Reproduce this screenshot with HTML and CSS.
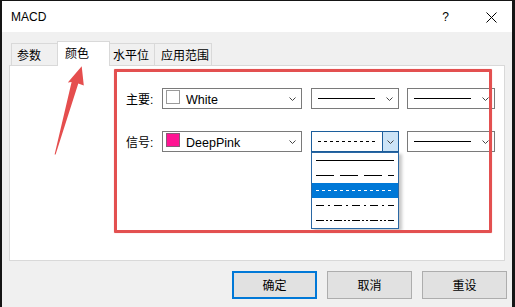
FILE: index.html
```html
<!DOCTYPE html>
<html lang="zh-CN">
<head>
<meta charset="utf-8">
<title>MACD</title>
<link rel="stylesheet" href="styles.css">
</head>
<body>
<div class="window">
  <div class="titlebar">
    <span class="title">MACD</span>
    <span class="help">?</span>
    <svg class="close" width="11" height="11" viewBox="0 0 11 11"><path d="M0.5 0.5L10.5 10.5M10.5 0.5L0.5 10.5" stroke="#000" stroke-width="1" fill="none"/></svg>
  </div>

  <div class="tabs">
    <div class="tab tab-1">参数</div>
    <div class="tab tab-active tab-2">颜色</div>
    <div class="tab tab-3">水平位</div>
    <div class="tab tab-4">应用范围</div>
  </div>

  <div class="panel">
    <div class="form">
      <div class="row">
        <span class="label">主要:</span>
        <div class="combo combo-color">
          <span class="swatch swatch-white"></span>
          <span class="ctext">White</span>
          <svg class="chev" width="7" height="4" viewBox="0 0 7 4"><polyline points="0.5,0.5 3.5,3.5 6.5,0.5" fill="none" stroke="#444" stroke-width="1"/></svg>
        </div>
        <div class="combo combo-line combo-mid">
          <svg class="ln" width="57" height="1"><line x1="0" y1="0.5" x2="57" y2="0.5" stroke="#000" stroke-width="1"/></svg>
          <svg class="chev" width="7" height="4" viewBox="0 0 7 4"><polyline points="0.5,0.5 3.5,3.5 6.5,0.5" fill="none" stroke="#444" stroke-width="1"/></svg>
        </div>
        <div class="combo combo-line">
          <svg class="ln" width="57" height="1"><line x1="0" y1="0.5" x2="57" y2="0.5" stroke="#000" stroke-width="1"/></svg>
          <svg class="chev" width="7" height="4" viewBox="0 0 7 4"><polyline points="0.5,0.5 3.5,3.5 6.5,0.5" fill="none" stroke="#444" stroke-width="1"/></svg>
        </div>
      </div>

      <div class="row">
        <span class="label">信号:</span>
        <div class="combo combo-color">
          <span class="swatch swatch-pink"></span>
          <span class="ctext">DeepPink</span>
          <svg class="chev" width="7" height="4" viewBox="0 0 7 4"><polyline points="0.5,0.5 3.5,3.5 6.5,0.5" fill="none" stroke="#444" stroke-width="1"/></svg>
        </div>
        <div class="combo combo-line combo-mid combo-open">
          <svg class="ln" width="57" height="1"><line x1="0" y1="0.5" x2="57" y2="0.5" stroke="#000" stroke-width="1" stroke-dasharray="3 3"/></svg>
          <span class="dd-btn">
            <svg class="chev-in" width="7" height="4" viewBox="0 0 7 4"><polyline points="0.5,0.5 3.5,3.5 6.5,0.5" fill="none" stroke="#444" stroke-width="1"/></svg>
          </span>
          <div class="dropdown">
            <div class="item"><svg width="78" height="1"><line x1="0" y1="0.5" x2="78" y2="0.5" stroke="#000" stroke-width="1"/></svg></div>
            <div class="item"><svg width="78" height="1"><line x1="0" y1="0.5" x2="78" y2="0.5" stroke="#000" stroke-width="1" stroke-dasharray="18 6"/></svg></div>
            <div class="item item-selected"><svg width="78" height="1"><line x1="0" y1="0.5" x2="78" y2="0.5" stroke="#fff" stroke-width="1" stroke-dasharray="3 3"/></svg></div>
            <div class="item"><svg width="78" height="1"><line x1="0" y1="0.5" x2="78" y2="0.5" stroke="#000" stroke-width="1" stroke-dasharray="8 4 2 4"/></svg></div>
            <div class="item"><svg width="78" height="1"><line x1="0" y1="0.5" x2="78" y2="0.5" stroke="#000" stroke-width="1" stroke-dasharray="8 2 2 2 2 2"/></svg></div>
          </div>
        </div>
        <div class="combo combo-line">
          <svg class="ln" width="57" height="1"><line x1="0" y1="0.5" x2="57" y2="0.5" stroke="#000" stroke-width="1"/></svg>
          <svg class="chev" width="7" height="4" viewBox="0 0 7 4"><polyline points="0.5,0.5 3.5,3.5 6.5,0.5" fill="none" stroke="#444" stroke-width="1"/></svg>
        </div>
      </div>
    </div>
  </div>

  <div class="buttons">
    <button class="btn btn-default">确定</button>
    <button class="btn">取消</button>
    <button class="btn">重设</button>
  </div>

  <div class="annot-box"></div>
  <svg class="annot-arrow" width="100" height="160" viewBox="0 0 100 160">
    <polygon points="79.7,65.3 81.8,84.5 76.3,82.6 53.6,153.6 52.6,153.6 69.6,81 65.8,81.6" fill="#e54e4e"/>
  </svg>
</div>
</body>
</html>
```

FILE: styles.css
```css
* { box-sizing: border-box; }

html, body {
  margin: 0;
  padding: 0;
}

body {
  background: #151515;
  width: 515px;
  height: 307px;
  overflow: hidden;
  font-family: "Noto Sans CJK SC", sans-serif;
  font-size: 12px;
  color: #000;
}

.window {
  position: relative;
  margin: 1px 0 0 2px;
  width: 510px;
  height: 306px;
  background: #f0f0f0;
  display: flex;
  flex-direction: column;
}

/* title bar */
.titlebar {
  height: 31px;
  background: #fff;
  display: flex;
  align-items: center;
  padding: 0 15px 0 9px;
}

.title {
  flex: 1;
  font-family: "Liberation Sans", sans-serif;
  font-size: 12px;
  line-height: 1;
}

.help {
  font-family: "Liberation Sans", sans-serif;
  font-size: 12px;
  line-height: 1;
  margin-right: 37px;
  margin-top: 1px;
}

.close {
  display: block;
  margin-top: 1px;
}

/* tabs */
.tabs {
  display: flex;
  align-items: flex-end;
  height: 24px;
  margin: 9px 0 0 9px;
}

.tab {
  height: 22px;
  margin-right: -1px;
  margin-bottom: 0;
  border: 1px solid #d9d9d9;
  border-bottom: none;
  background: #f0f0f0;
  display: flex;
  align-items: center;
  line-height: 1;
  padding-top: 1px;
}

.tab-1 { width: 47px; padding-left: 5px; }
.tab-2 { width: 53px; padding-left: 7px; }
.tab-3 { width: 46px; padding-left: 3px; }
.tab-4 { width: 58px; padding-left: 6px; }

.tab-active {
  position: relative;
  z-index: 1;
  height: 25px;
  margin-bottom: -1px;
  background: #fff;
  padding-top: 0;
  padding-bottom: 3px;
}

/* panel */
.panel {
  margin-left: 7px;
  width: 496px;
  height: 196px;
  background: #fff;
  border: 1px solid #d9d9d9;
}

.form {
  padding: 22px 0 0 116px;
  display: flex;
  flex-direction: column;
  gap: 22px;
}

.row {
  display: flex;
  height: 21px;
}

.label {
  width: 36px;
  display: flex;
  align-items: center;
  padding-top: 3px;
  font-family: "Liberation Sans", "Noto Sans CJK SC", sans-serif;
  font-size: 12px;
  line-height: 1;
}

.combo {
  height: 21px;
  border: 1px solid #7a7a7a;
  background: #fff;
  display: flex;
  align-items: center;
}

.combo-color {
  width: 140px;
  margin-right: 9px;
}

.combo-line {
  width: 88px;
}

.combo-mid {
  margin-right: 8px;
}

.swatch {
  width: 14px;
  height: 14px;
  margin-left: 3px;
  align-self: flex-start;
  margin-top: 1px;
  border: 1px solid #8c8c8c;
  flex: none;
}

.swatch-white { background: #fff; border-color: #9a9a9a; }
.swatch-pink { background: #ff1493; border-color: #8a5a78; }

.ctext {
  flex: 1;
  margin-left: 6px;
  padding-top: 3px;
  font-family: "Liberation Sans", sans-serif;
  font-size: 12.5px;
  line-height: 14px;
  white-space: nowrap;
}

.chev {
  display: block;
  flex: none;
  margin-left: auto;
  margin-right: 5px;
}

.ln {
  display: block;
  flex: none;
  margin-left: 6px;
}

/* open combo */
.combo-open {
  position: relative;
  border-color: #1c5e9c;
}

.dd-btn {
  margin-left: auto;
  width: 16px;
  align-self: stretch;
  border-left: 1px solid #1c5e9c;
  background: #cce4f7;
  display: flex;
  align-items: center;
  justify-content: center;
}

.chev-in { display: block; }

.dropdown {
  position: absolute;
  left: -1px;
  top: calc(100% + 1px);
  width: 88px;
  border: 1px solid #2a67a3;
  background: #fff;
  box-shadow: 3px 2px 3px rgba(0, 0, 0, 0.22);
  z-index: 2;
}

.item {
  height: 15px;
  padding: 0 4px;
  display: flex;
  align-items: center;
}

.item svg { display: block; }

.item-selected {
  background: #0078d7;
}

/* buttons */
.buttons {
  display: flex;
  justify-content: flex-end;
  gap: 10px;
  margin-top: 10px;
  padding-right: 5px;
}

.btn {
  width: 85px;
  height: 28px;
  background: #e1e1e1;
  border: 1px solid #adadad;
  font-family: "Noto Sans CJK SC", sans-serif;
  font-size: 12px;
  color: #000;
  padding: 0;
  margin: 0;
  line-height: 1;
}

.btn-default {
  border: 2px solid #0078d7;
}

/* annotations */
.annot-box {
  position: absolute;
  left: 112px;
  top: 68px;
  width: 378px;
  height: 164px;
  border: 3px solid #e35050;
  border-radius: 1px;
  box-shadow: 0 0 1px rgba(227, 80, 80, 0.6);
  z-index: 3;
  pointer-events: none;
}

.annot-arrow {
  position: absolute;
  left: 0;
  top: 0;
  z-index: 3;
}
```
